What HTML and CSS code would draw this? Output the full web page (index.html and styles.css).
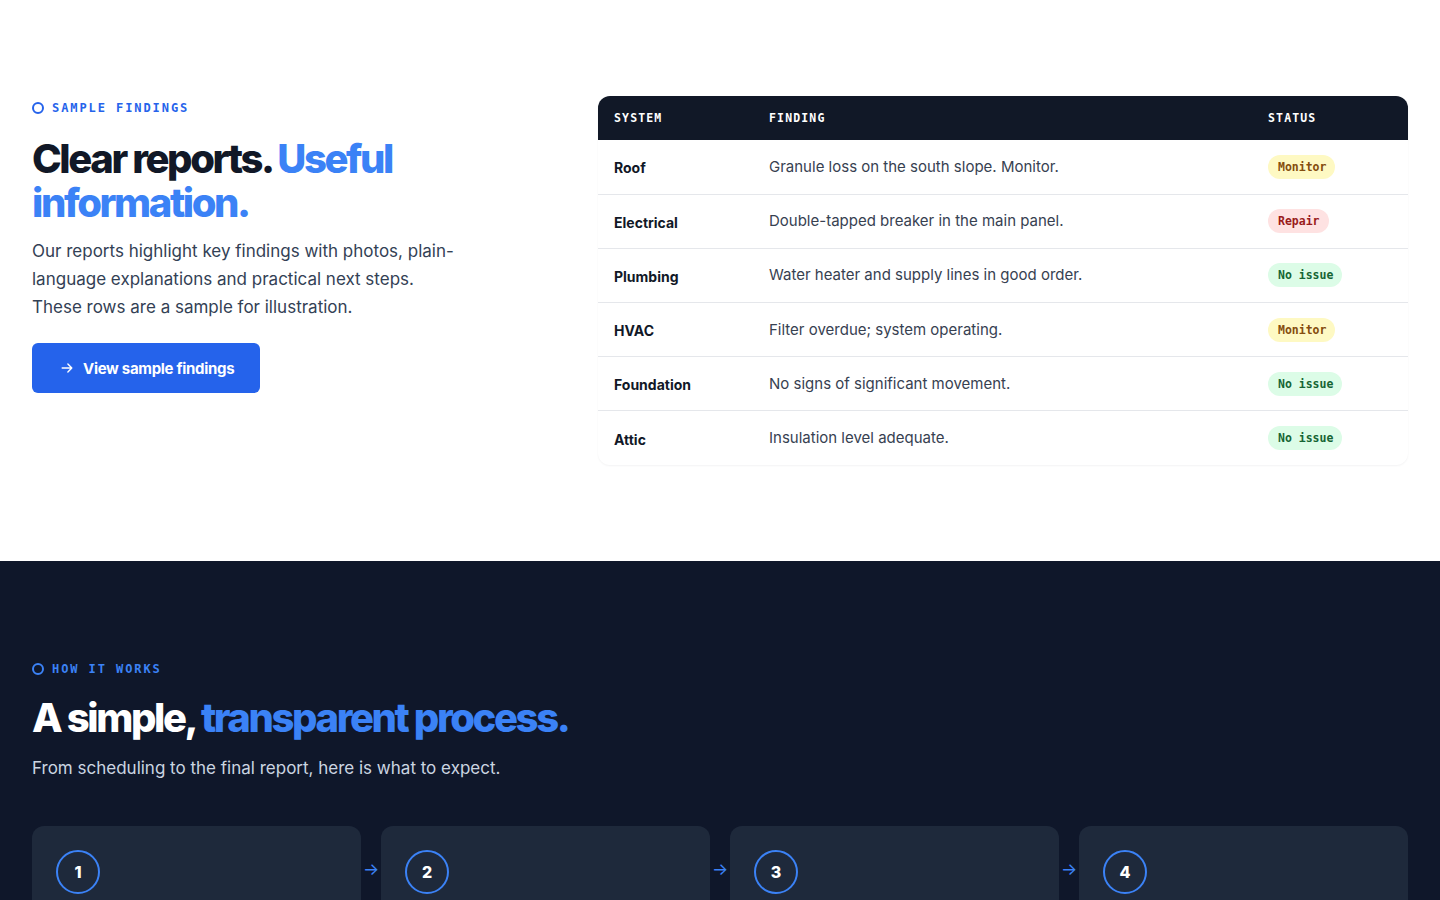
FILE: index.html
```html
<!DOCTYPE html>
<html lang="en">
<head>
<meta charset="utf-8">
<title>Sample findings &amp; how it works</title>
<link rel="stylesheet" href="styles.css">
</head>
<body>
<section class="findings">
  <div class="wrap findings-grid">
    <div class="intro">
      <p class="eyebrow"><span class="ring"></span>SAMPLE FINDINGS</p>
      <h2 class="title">Clear reports. <span class="accent">Useful information.</span></h2>
      <p class="lead">Our reports highlight key findings with photos, plain-language explanations and practical next steps. These rows are a sample for illustration.</p>
      <a class="btn" href="#findings">
        <svg width="14" height="14" viewBox="0 0 16 16" fill="none" stroke="currentColor" stroke-width="1.6" stroke-linecap="round" stroke-linejoin="round"><path d="M2.5 8h11M9 3.5 13.5 8 9 12.5"/></svg>
        View sample findings
      </a>
    </div>
    <div class="table-card" id="findings">
      <table class="report">
        <thead>
          <tr><th class="c-sys">SYSTEM</th><th class="c-find">FINDING</th><th class="c-status">STATUS</th></tr>
        </thead>
        <tbody>
          <tr><td class="sys">Roof</td><td class="find">Granule loss on the south slope. Monitor.</td><td><span class="badge monitor">Monitor</span></td></tr>
          <tr><td class="sys">Electrical</td><td class="find">Double-tapped breaker in the main panel.</td><td><span class="badge repair">Repair</span></td></tr>
          <tr><td class="sys">Plumbing</td><td class="find">Water heater and supply lines in good order.</td><td><span class="badge ok">No issue</span></td></tr>
          <tr><td class="sys">HVAC</td><td class="find">Filter overdue; system operating.</td><td><span class="badge monitor">Monitor</span></td></tr>
          <tr><td class="sys">Foundation</td><td class="find">No signs of significant movement.</td><td><span class="badge ok">No issue</span></td></tr>
          <tr><td class="sys">Attic</td><td class="find">Insulation level adequate.</td><td><span class="badge ok">No issue</span></td></tr>
        </tbody>
      </table>
    </div>
  </div>
</section>

<section class="process">
  <div class="wrap">
    <p class="eyebrow dark"><span class="ring"></span>HOW IT WORKS</p>
    <h2 class="title light">A simple, <span class="accent">transparent process.</span></h2>
    <p class="sub">From scheduling to the final report, here is what to expect.</p>
    <ol class="steps">
      <li class="step"><span class="num">1</span><h3>Book your inspection</h3><p>Pick a time online or by phone and we confirm the details.</p></li>
      <li class="step"><span class="num">2</span><h3>On-site inspection</h3><p>We walk through every major system of the home with you.</p></li>
      <li class="step"><span class="num">3</span><h3>Review the findings</h3><p>We explain what we found and answer your questions.</p></li>
      <li class="step"><span class="num">4</span><h3>Receive your report</h3><p>A clear, photo-rich report arrives within 24 hours.</p></li>
    </ol>
  </div>
</section>
</body>
</html>
```

FILE: styles.css
```css
* { box-sizing: border-box; }

body {
  margin: 0;
  font-family: Inter, "Noto Sans", sans-serif;
  color: #111827;
  background: #ffffff;
}

.wrap {
  max-width: 1440px;
  padding: 0 32px;
  margin: 0 auto;
}

/* ---------- Findings section ---------- */
.findings {
  padding: 96px 0 96px;
}

.findings-grid {
  display: grid;
  grid-template-columns: 1fr 810px;
  gap: 48px;
  align-items: start;
}

.eyebrow {
  display: flex;
  align-items: center;
  gap: 8px;
  margin: 5px 0 0;
  font-family: "DejaVu Sans Mono", "Liberation Mono", monospace;
  font-weight: 700;
  font-size: 12px;
  letter-spacing: 0.16em;
  color: #2563eb;
  line-height: 14px;
}

.eyebrow.dark { color: #3b82f6; }

.ring {
  width: 12px;
  height: 12px;
  border: 2.5px solid currentColor;
  border-radius: 50%;
  flex: none;
}

.title {
  margin: 22px 0 0;
  font-family: Inter, sans-serif;
  font-weight: 800;
  font-size: 40px;
  line-height: 44px;
  letter-spacing: -0.06em;
  color: #111827;
  max-width: 400px;
}

.title .accent { color: #3b82f6; }

.title.light {
  color: #ffffff;
  max-width: none;
}

.lead {
  margin: 12px 0 0;
  font-size: 17px;
  line-height: 28px;
  color: #334155;
  max-width: 430px;
}

.btn {
  display: inline-flex;
  align-items: center;
  gap: 9px;
  margin-top: 22px;
  height: 50px;
  padding: 0 26px 0 28px;
  background: #2563eb;
  border-radius: 6px;
  color: #ffffff;
  text-decoration: none;
  font-weight: 700;
  font-size: 15px;
  letter-spacing: -0.02em;
}

/* ---------- Findings table ---------- */
.table-card {
  border-radius: 12px;
  overflow: hidden;
  background: #ffffff;
  box-shadow: 0 1px 2px rgba(15, 23, 42, 0.05);
}

.report {
  width: 100%;
  border-collapse: collapse;
  table-layout: fixed;
}

.report th {
  background: #111827;
  color: #ffffff;
  text-align: left;
  height: 44px;
  padding: 0 16px;
  font-family: "DejaVu Sans Mono", "Liberation Mono", monospace;
  font-weight: 700;
  font-size: 11.5px;
  letter-spacing: 0.1em;
}

.report .c-sys { width: 155px; }
.report .c-status { width: 156px; }

.report td {
  height: 54.2px;
  padding: 2px 16px 0;
  border-top: 1px solid #e5e7eb;
  vertical-align: middle;
}

.report tbody tr:first-child td { border-top: none; }

.report .sys {
  font-weight: 700;
  font-size: 14px;
  color: #111827;
}

.report .find {
  font-size: 15px;
  color: #374151;
  padding-top: 0;
  padding-bottom: 1px;
}

.badge {
  display: inline-block;
  padding: 5px 9px 5px 10px;
  border-radius: 999px;
  font-family: "DejaVu Sans Mono", "Liberation Mono", monospace;
  font-weight: 700;
  font-size: 11.5px;
  line-height: 14px;
  position: relative;
  top: -1px;
}

.badge.monitor { background: #fef9c3; color: #854d0e; }
.badge.repair { background: #fee2e2; color: #991b1b; }
.badge.ok { background: #dcfce7; color: #166534; }

/* ---------- Process section ---------- */
.process {
  background: #0f172a;
  padding: 96px 0 64px;
}

.process .title { margin-top: 20px; }

.sub {
  margin: 14px 0 0;
  font-size: 17px;
  line-height: 28px;
  color: #cbd5e1;
}

.steps {
  list-style: none;
  margin: 44px 0 0;
  padding: 0;
  display: grid;
  grid-template-columns: repeat(4, 1fr);
  gap: 20px;
}

.step {
  position: relative;
  background: #1e293b;
  border-radius: 12px;
  padding: 24px 24px 28px;
  min-height: 200px;
}

/* arrow connecting one step to the next */
.step:not(:last-child)::after {
  content: "→";
  position: absolute;
  right: -19px;
  top: 33px;
  width: 18px;
  text-align: center;
  color: #3b82f6;
  font-size: 17px;
  line-height: 20px;
}

.num {
  display: flex;
  align-items: center;
  justify-content: center;
  width: 44px;
  height: 44px;
  border: 2px solid #3b82f6;
  border-radius: 50%;
  color: #ffffff;
  font-weight: 800;
  font-size: 16px;
}

.step h3 {
  margin: 20px 0 0;
  color: #ffffff;
  font-size: 18px;
  font-weight: 700;
}

.step p {
  margin: 8px 0 0;
  color: #94a3b8;
  font-size: 15px;
  line-height: 24px;
}
```
